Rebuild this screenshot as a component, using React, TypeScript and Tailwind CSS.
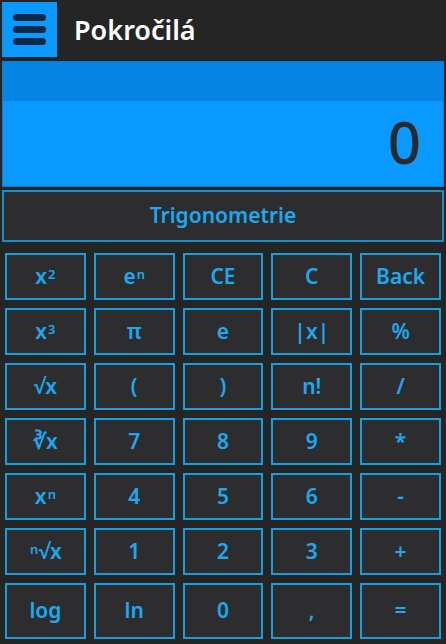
import React from 'react';

const font = { fontFamily: '"Noto Sans", "Open Sans", sans-serif' };

const Sup = ({ children }: { children: React.ReactNode }) => (
  <sup className="relative -top-[3px] ml-[1px] text-[13px]">{children}</sup>
);

const keys: React.ReactNode[] = [
  <>x<Sup>2</Sup></>,
  <>e<Sup>n</Sup></>,
  'CE',
  'C',
  'Back',
  <>x<Sup>3</Sup></>,
  'π',
  'e',
  '|x|',
  '%',
  '√x',
  '(',
  ')',
  'n!',
  '/',
  '∛x',
  '7',
  '8',
  '9',
  '*',
  <>x<Sup>n</Sup></>,
  '4',
  '5',
  '6',
  '-',
  <><Sup>n</Sup>√x</>,
  '1',
  '2',
  '3',
  '+',
  'log',
  'ln',
  '0',
  ',',
  '=',
];

export default function App() {
  return (
    <div
      className="flex h-[644px] w-[446px] flex-col bg-[#252526] text-[#1ba9f0]"
      style={font}
    >
      <header className="flex h-[61px] items-start">
        <button
          type="button"
          className="ml-[2px] mt-[2px] flex h-[55px] w-[55px] flex-col items-center justify-center gap-[5px] bg-[#0b99ff]"
        >
          <span className="h-[7px] w-[33px] rounded-full bg-[#0b2a47]" />
          <span className="h-[7px] w-[33px] rounded-full bg-[#0b2a47]" />
          <span className="h-[7px] w-[33px] rounded-full bg-[#0b2a47]" />
        </button>
        <h1 className="ml-[17px] mt-[10px] text-[27px] font-semibold text-white">
          Pokročilá
        </h1>
      </header>

      <section className="mx-[2px] flex h-[126px] flex-col border border-[#0a7ed6]">
        <div className="h-[39px] bg-[#0584e6]" />
        <div className="flex flex-1 items-center justify-end bg-[#0a9aff] pr-[22px] pb-[4px]">
          <span className="text-[58px] font-medium leading-none text-[#2a2a2a]">0</span>
        </div>
      </section>

      <button
        type="button"
        className="mx-[2px] mt-[3px] h-[52px] border-2 border-[#1890c4] bg-[#2d2d30] text-[21px] font-semibold"
      >
        Trigonometrie
      </button>

      <div className="grid flex-1 grid-cols-5 grid-rows-[47px_47px_47px_47px_47px_47px_1fr] gap-x-2 gap-y-2 px-[5px] pt-[11px] pb-[5px]">
        {keys.map((k, i) => (
          <button
            key={i}
            type="button"
            className="flex items-center justify-center border-2 border-[#169fdc] bg-[#2d2d30] text-[21px] font-semibold"
          >
            {k}
          </button>
        ))}
      </div>
    </div>
  );
}
